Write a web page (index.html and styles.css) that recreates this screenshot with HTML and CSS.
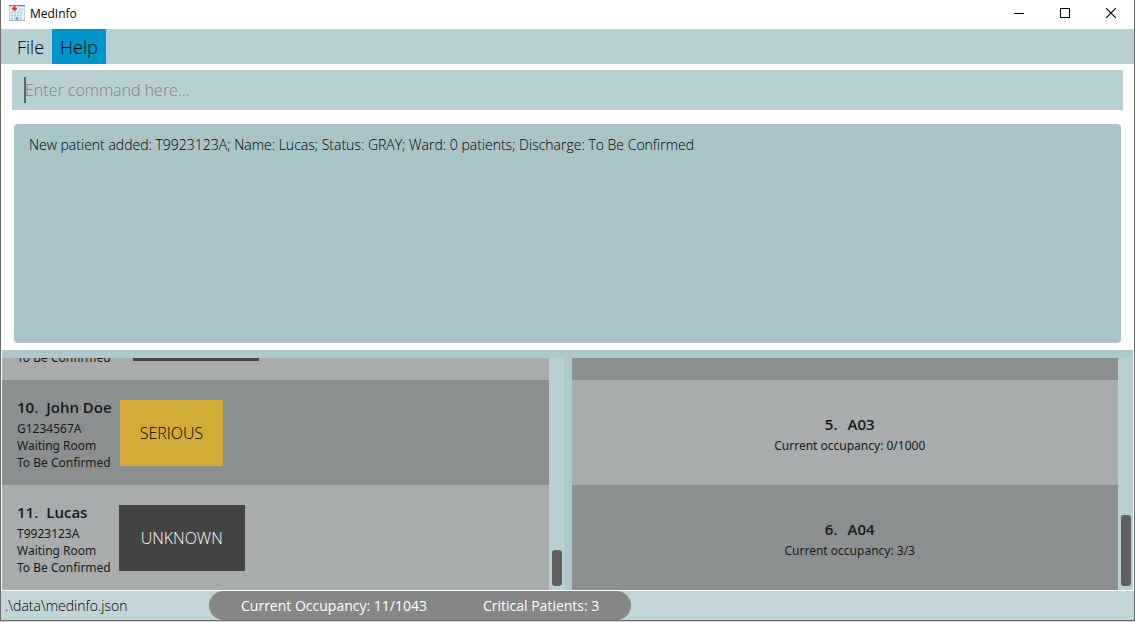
FILE: index.html
```
<!DOCTYPE html>
<html lang="en">
<head>
<meta charset="utf-8">
<title>MedInfo</title>
<link rel="stylesheet" href="styles.css">
</head>
<body>
<div class="window">
  <header class="titlebar">
    <svg class="app-icon" width="16" height="17" viewBox="0 0 16 17" aria-hidden="true">
      <rect x="1" y="1" width="14" height="15" fill="#e6f0f6"/>
      <rect x="0" y="0" width="16" height="1" fill="#7f8387"/>
      <rect x="0" y="1" width="16" height="1" fill="#c9ced3"/>
      <rect x="0" y="15" width="16" height="1" fill="#b3aeaa"/>
      <path d="M2 7.500h12M2 10.500h12M2 13.500h12M10 4.500h4" stroke="#a3d4ee" stroke-width="2" stroke-dasharray="2 1"/>
      <path d="M.5 2v13M15.500 2v13" stroke="#c6d3db"/>
      <rect x="3" y="1" width="6" height="5" fill="#fbf0f0"/>
      <path d="M5.500 1v5M3 3.500h5" stroke="#e02b35" stroke-width="2"/>
      <rect x="7" y="12" width="2" height="3" fill="#5fa9d3"/>
    </svg>
    <span class="app-name">MedInfo</span>
    <div class="window-buttons">
      <button class="window-button" aria-label="Minimize"><svg width="10" height="10" viewBox="0 0 10 10"><path d="M0 5.500h10" stroke="#000"/></svg></button>
      <button class="window-button" aria-label="Maximize"><svg width="10" height="10" viewBox="0 0 10 10"><rect x=".5" y=".5" width="9" height="9" fill="none" stroke="#000"/></svg></button>
      <button class="window-button" aria-label="Close"><svg width="10" height="10" viewBox="0 0 10 10"><path d="M0 0l10 10M10 0L0 10" stroke="#000" stroke-width="1.100"/></svg></button>
    </div>
  </header>
  <nav class="menubar">
    <button class="menu">File</button>
    <button class="menu menu-active">Help</button>
  </nav>
  <div class="command">
    <input class="command-input" type="text" placeholder="Enter command here..." aria-label="Command">
    <span class="caret"></span>
  </div>
  <main class="content">
    <section class="result-pane">
      <output class="result">New patient added: T9923123A; Name: Lucas; Status: GRAY; Ward: 0 patients; Discharge: To Be Confirmed</output>
    </section>
    <section class="lists">
      <div class="list-pane">
        <ul class="list">
          <li class="row row-light">
            <div class="info info-end"><p>To Be Confirmed</p></div>
            <span class="badge badge-unknown badge-empty"></span>
          </li>
          <li class="row row-dark">
            <div class="info"><h2 class="name"><span>10.</span><span>John Doe</span></h2><p>G1234567A</p><p>Waiting Room</p><p>To Be Confirmed</p></div>
            <span class="badge badge-serious">SERIOUS</span>
          </li>
          <li class="row row-light">
            <div class="info"><h2 class="name"><span>11.</span><span>Lucas</span></h2><p>T9923123A</p><p>Waiting Room</p><p>To Be Confirmed</p></div>
            <span class="badge badge-unknown">UNKNOWN</span>
          </li>
        </ul>
        <div class="scrollbar"><div class="thumb thumb-short"></div></div>
      </div>
      <div class="list-pane">
        <ul class="list">
          <li class="row row-dark ward"></li>
          <li class="row row-light ward"><h2 class="name"><span>5.</span><span>A03</span></h2><p>Current occupancy: 0/1000</p></li>
          <li class="row row-dark ward"><h2 class="name"><span>6.</span><span>A04</span></h2><p>Current occupancy: 3/3</p></li>
        </ul>
        <div class="scrollbar"><div class="thumb thumb-long"></div></div>
      </div>
    </section>
  </main>
  <footer class="statusbar">
    <span class="path">.\data\medinfo.json</span>
    <div class="stats"><span>Current Occupancy: 11/1043</span><span>Critical Patients: 3</span></div>
  </footer>
</div>
</body>
</html>
```
FILE: styles.css
```
* { box-sizing: border-box; }
body {
  margin: 0;
  background: #d6d2d2;
  font-family: "Open Sans", "Noto Sans", sans-serif;
  color: #000;
}
h2, p, ul { margin: 0; padding: 0; }
button { border: 0; padding: 0; background: none; font: inherit; color: inherit; }

.window {
  display: flex;
  flex-direction: column;
  height: calc(100vh - 1px);
  background: #fff;
  border: 1px solid #6c6c6c;
  border-top: 0;
}

.titlebar { display: flex; align-items: center; height: 29px; flex: none; padding-left: 8px; }
.app-icon { margin-bottom: 3px; }
.app-name { margin: 0 auto 2px 5px; font-size: 12px; }
.window-buttons { display: flex; align-self: flex-start; height: 26px; }
.window-button { display: flex; align-items: center; justify-content: center; width: 46px; }

.menubar { display: flex; flex: none; height: 35px; padding-left: 8px; background: #b7d0d4; }
.menu { padding: 0 8px; font-size: 18px; font-weight: 300; }
.menu-active { background: #0096c9; }

.command { position: relative; flex: none; height: 40px; margin: 6px 11px 0; }
.command-input {
  width: 100%;
  height: 100%;
  padding: 0 13px;
  border: 0;
  outline: 0;
  background: #b7d0d4;
  font: 300 16px "Open Sans", "Noto Sans", sans-serif;
}
.command-input::placeholder { color: #808080; opacity: 1; }
.caret { position: absolute; left: 12px; top: 7px; width: 2px; height: 26px; background: #5b686a; }

.content { display: grid; grid-template-rows: minmax(0, 1fr) minmax(0, 1fr); flex: 1; min-height: 0; }
.result-pane { display: flex; padding: 14px 13px 7px; }
.result {
  flex: 1;
  padding: 11px 15px;
  border-radius: 4px;
  background: #a8c4c9;
  font-size: 14px;
  line-height: 20px;
  font-weight: 300;
}

.lists {
  display: flex;
  min-height: 0;
  gap: 8px;
  margin: 0 1px;
  padding-top: 8px;
  background: #aec9ce;
}
.list-pane { display: flex; flex: 1 1 0; min-width: 0; }
.list {
  display: flex;
  flex: 1;
  flex-direction: column;
  justify-content: flex-end;
  overflow: hidden;
  list-style: none;
}
.row {
  display: flex;
  flex: none;
  height: 105px;
  color: #161a1a;
  font-family: "Noto Sans", "Open Sans", sans-serif;
  font-size: 12px;
  line-height: 17px;
}
.row-light { background: #a8acad; }
.row-dark { background: #8b8f90; }
.row:not(.ward) { align-items: center; gap: 8px; padding-left: 15px; }
.ward { flex-direction: column; align-items: center; justify-content: center; padding: 1px 0 0 10px; }
.name {
  display: flex;
  gap: 8px;
  margin-bottom: 2px;
  font-family: "Open Sans", "Noto Sans", sans-serif;
  font-size: 15px;
  line-height: 21px;
  font-weight: 600;
}
.info { padding-top: 2px; white-space: nowrap; }
.info-end { align-self: flex-end; padding-bottom: 14px; }
.ward .name { gap: 10px; margin-bottom: 1px; line-height: 24px; }
.badge {
  padding: 21px 20px;
  font-family: "Open Sans", "Noto Sans", sans-serif;
  font-size: 16px;
  line-height: 24px;
  font-weight: 300;
}
.badge-serious { background: #d1ad37; color: #000; }
.badge-unknown { min-width: 126px; background: #444; color: #fff; text-align: center; }
.badge-empty { height: 66px; margin-left: 14px; }

.scrollbar { display: flex; flex: none; align-items: flex-end; width: 15px; padding: 0 2px 4px 3px; background: #b7d0d4; }
.thumb { flex: 1; border-radius: 3px; background: #606060; }
.thumb-short { height: 36px; }
.thumb-long { height: 71px; }

.statusbar {
  display: flex;
  flex: none;
  height: 30px;
  border-top: 1px solid #fff;
  background: #c0d5d8;
  font-size: 14px;
  line-height: 30px;
}
.path { width: 208px; padding-left: 4px; font-weight: 300; }
.stats { display: flex; gap: 56px; padding: 0 32px; border-radius: 15px; background: #858786; color: #fff; font-weight: 500; }
```
